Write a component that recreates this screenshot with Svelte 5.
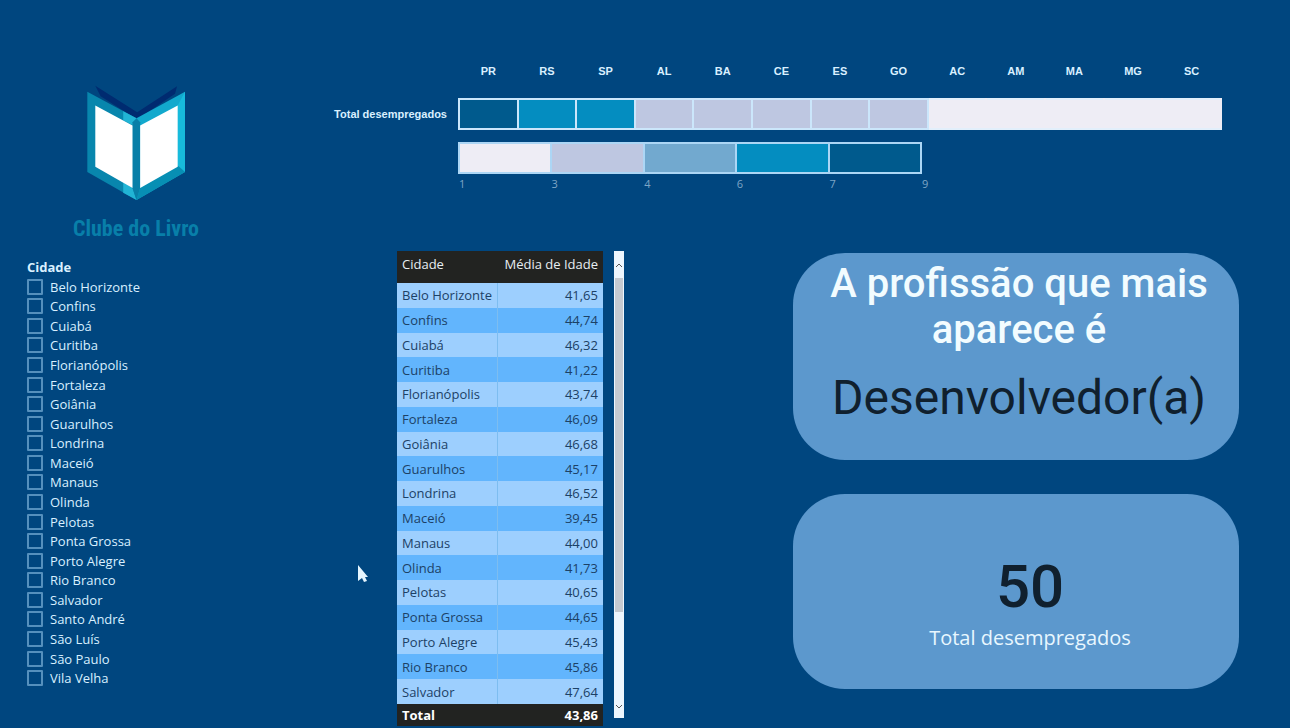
<script>
  const cities = [
    'Belo Horizonte', 'Confins', 'Cuiabá', 'Curitiba', 'Florianópolis', 'Fortaleza', 'Goiânia',
    'Guarulhos', 'Londrina', 'Maceió', 'Manaus', 'Olinda', 'Pelotas', 'Ponta Grossa',
    'Porto Alegre', 'Rio Branco', 'Salvador', 'Santo André', 'São Luís', 'São Paulo', 'Vila Velha'
  ];
  const averages = [
    '41,65', '44,74', '46,32', '41,22', '43,74', '46,09', '46,68', '45,17', '46,52',
    '39,45', '44,00', '41,73', '40,65', '44,65', '45,43', '45,86', '47,64'
  ];
  const states = [
    ['PR', 'l5'], ['RS', 'l4'], ['SP', 'l4'], ['AL', 'l2'], ['BA', 'l2'], ['CE', 'l2'], ['ES', 'l2'],
    ['GO', 'l2'], ['AC', 'l1'], ['AM', 'l1'], ['MA', 'l1'], ['MG', 'l1'], ['SC', 'l1']
  ];
  const levels = ['l1', 'l2', 'l3', 'l4', 'l5'];
  const ticks = [1, 3, 4, 6, 7, 9];
  let selected = $state([]);
</script>

<main>
  <header>
    <div class="brand">
      <svg viewBox="78 28 304 350" aria-hidden="true">
        <path d="M106 32 L232 112 L352 34 L346 56 L232 134 L122 64Z" fill="#002b70" />
        <path d="M82 50 L230 130 L230 376 L82 292Z" fill="#0886ad" />
        <path d="M376 50 L230 130 L230 376 L376 292Z" fill="#12a9cd" />
        <path d="M376 50 L354 92 L354 272 L376 292Z" fill="#17bbdc" />
        <path d="M376 292 L354 272 L241 340 L230 376Z" fill="#078fb4" />
        <path d="M190 109 L230 130 L230 156 L190 136Z M190 322 L218 340 L230 376 L190 354Z" fill="#21b4d5" />
        <path d="M218 142 L230 130 L241 142 V340 L230 376 L218 340Z" fill="#087fa8" />
        <path d="M106 92 L218 152 V340 L106 276Z M354 92 L241 152 V340 L354 276Z" fill="#fff" />
      </svg>
      <h1>Clube do Livro</h1>
    </div>

    <section class="heat">
      <table class="map">
        <thead>
          <tr><td></td>{#each states as [name]}<th scope="col">{name}</th>{/each}</tr>
        </thead>
        <tbody>
          <tr>
            <th scope="row">Total desempregados</th>
            {#each states as [, level]}<td class={level}></td>{/each}
          </tr>
        </tbody>
      </table>
      <div class="legend">
        <div class="scale">{#each levels as level}<span class={level}></span>{/each}</div>
        <div class="ticks">{#each ticks as tick}<span>{tick}</span>{/each}</div>
      </div>
    </section>
  </header>

  <div class="content">
    <fieldset>
      <legend>Cidade</legend>
      <div class="options">
        {#each cities as city}
          <label><input type="checkbox" value={city} bind:group={selected} />{city}</label>
        {/each}
      </div>
    </fieldset>

    <div class="ages">
      <table class="data">
        <thead><tr><th scope="col">Cidade</th><th scope="col">Média de Idade</th></tr></thead>
        <tbody>
          {#each averages as average, i}
            <tr><td>{cities[i]}</td><td>{average}</td></tr>
          {/each}
        </tbody>
        <tfoot><tr><th scope="row">Total</th><td>43,86</td></tr></tfoot>
      </table>
      <div class="scroll">
        <button type="button" aria-label="Subir">
          <svg viewBox="0 0 8 6"><path d="M1 5 L4 2 L7 5" /></svg>
        </button>
        <div class="track"><div class="thumb"></div></div>
        <button type="button" aria-label="Descer">
          <svg viewBox="0 0 8 6"><path d="M1 1 L4 4 L7 1" /></svg>
        </button>
      </div>
    </div>

    <div class="cards">
      <section class="card job">
        <h2>A profissão que mais aparece é</h2>
        <p>Desenvolvedor(a)</p>
      </section>
      <section class="card total">
        <p>50</p>
        <h2>Total desempregados</h2>
      </section>
    </div>
  </div>

  <svg class="pointer" viewBox="0 0 12 20" aria-hidden="true">
    <path d="M1 1 V17 L5 14 L7 18 L10 17 L8 13 H11Z" fill="#e6f6ff" />
  </svg>
</main>

<style>
  :global(body) { margin: 0; background: #00467f; }
  main {
    position: relative;
    box-sizing: border-box;
    min-height: 100vh;
    display: grid;
    grid-template-rows: 251px 1fr;
    background: #00467f;
    color: #d9f0ff;
    font-family: "Open Sans", "Noto Sans", sans-serif;
    font-size: 13px;
  }
  h1, h2, p { margin: 0; font-weight: 400; }
  header { display: grid; grid-template-columns: 272px 1fr; column-gap: 58px; padding-right: 68px; }
  .brand { padding-top: 84px; display: flex; flex-direction: column; align-items: center; gap: 16px; }
  .brand svg { width: 101px; height: 117px; }
  h1 {
    font: 700 22px/24px "Liberation Sans Narrow", "Roboto Condensed", Roboto, sans-serif;
    color: #087fa9;
    white-space: nowrap;
  }

  .heat { padding-top: 62px; min-width: 0; }
  .map { width: 100%; table-layout: fixed; border-collapse: collapse; font: 700 11px/18px "Liberation Sans", sans-serif; }
  .map th, .map td { padding: 0; text-align: center; }
  .map thead td { width: 129px; }
  .map thead tr { height: 37px; vertical-align: top; }
  .map tbody th { text-align: right; padding-right: 11px; white-space: nowrap; }
  .map tbody td { height: 28px; border: 2px solid #cbe6fb; }
  .legend { margin: 12px 0 0 128px; width: 464px; max-width: 61%; }
  .scale { display: grid; grid-template-columns: repeat(5, 1fr); gap: 2px; padding: 2px; background: #acd6f5; }
  .scale span { height: 28px; }
  .ticks { display: grid; grid-template-columns: repeat(5, 1fr) 0; padding-left: 1px; font: 11px/20px "Open Sans", sans-serif; color: #7ea5c6; }
  .l1 { background: #eeedf5; }
  .l2 { background: #bec7e1; }
  .l3 { background: #72a9cf; }
  .l4 { background: #048dc0; }
  .l5 { background: #005a8d; }
  .map tbody .l1 { border-color: #eeedf5; border-top-color: #e2effb; border-bottom-color: #e2effb; }

  .content { display: grid; grid-template-columns: 370px 227px 1fr; padding: 0 51px 2px 27px; }
  fieldset { border: 0; margin: 0; padding: 6px 0 38px; min-width: 0; display: flex; flex-direction: column; }
  legend { float: left; padding: 0; font-weight: 700; line-height: 20px; }
  .options { flex: 1; display: grid; grid-auto-rows: 1fr; }
  label { display: flex; align-items: center; gap: 7px; line-height: 18px; font-weight: 500; }
  input {
    appearance: none;
    box-sizing: border-box;
    width: 16px;
    height: 16px;
    margin: 0;
    border: 2px solid #5590bd;
    border-radius: 1px;
  }
  input:checked { background: #9fd1ff; }

  .ages { display: grid; grid-template-columns: 206px 10px; column-gap: 11px; }
  .data { height: 100%; border-collapse: collapse; color: #1c4166; }
  .data th, .data td { padding: 0 5px; text-align: left; line-height: 18px; }
  .data tr > :first-child { width: 89px; white-space: nowrap; }
  .data tr > :last-child { text-align: right; }
  .data thead { background: #222321; color: #e8eef2; }
  .data thead tr { height: 32px; }
  .data thead th { font-weight: 500; padding-bottom: 6px; white-space: nowrap; }
  .data tbody tr { background: #9dcffe; }
  .data tbody tr:nth-child(even) { background: #62b5fd; }
  .data tbody td { font-weight: 500; }
  .data tbody td:first-child { border-right: 1px solid #7dbdf0; }
  .data tfoot { background: #222321; color: #fff; font-weight: 700; }
  .data tfoot tr { height: 22px; }

  .scroll { display: flex; flex-direction: column; background: #edf6fe; margin-bottom: 8px; }
  .scroll button { height: 27px; border: 0; padding: 0; background: none; }
  .scroll button:last-child { height: 22px; }
  .scroll svg { display: block; width: 8px; margin: auto; fill: none; stroke: #555; }
  .track { flex: 1; padding: 0 1px; }
  .thumb { height: 80%; background: #c5cad1; }

  .cards { display: grid; grid-template-rows: 207px 195px; row-gap: 34px; padding-top: 2px; margin-left: 169px; }
  .card { border-radius: 52px; background: #5c98cd; text-align: center; display: flex; flex-direction: column; }
  .job { padding-left: 6px; }
  .job h2 { padding: 8px 24px 0; font: 500 40px/46px Roboto, sans-serif; color: #f2fcff; }
  .job p { padding-top: 18px; font: 400 48px/54px Roboto, sans-serif; color: #10202e; }
  .total { padding-left: 28px; }
  .total p { padding-top: 60px; font: 500 60px/66px Roboto, sans-serif; color: #10202e; }
  .total h2 { padding-top: 4px; font-size: 20px; line-height: 28px; color: #e8f7ff; }

  .pointer { position: absolute; left: 357px; top: 564px; width: 12px; height: 20px; }
</style>
